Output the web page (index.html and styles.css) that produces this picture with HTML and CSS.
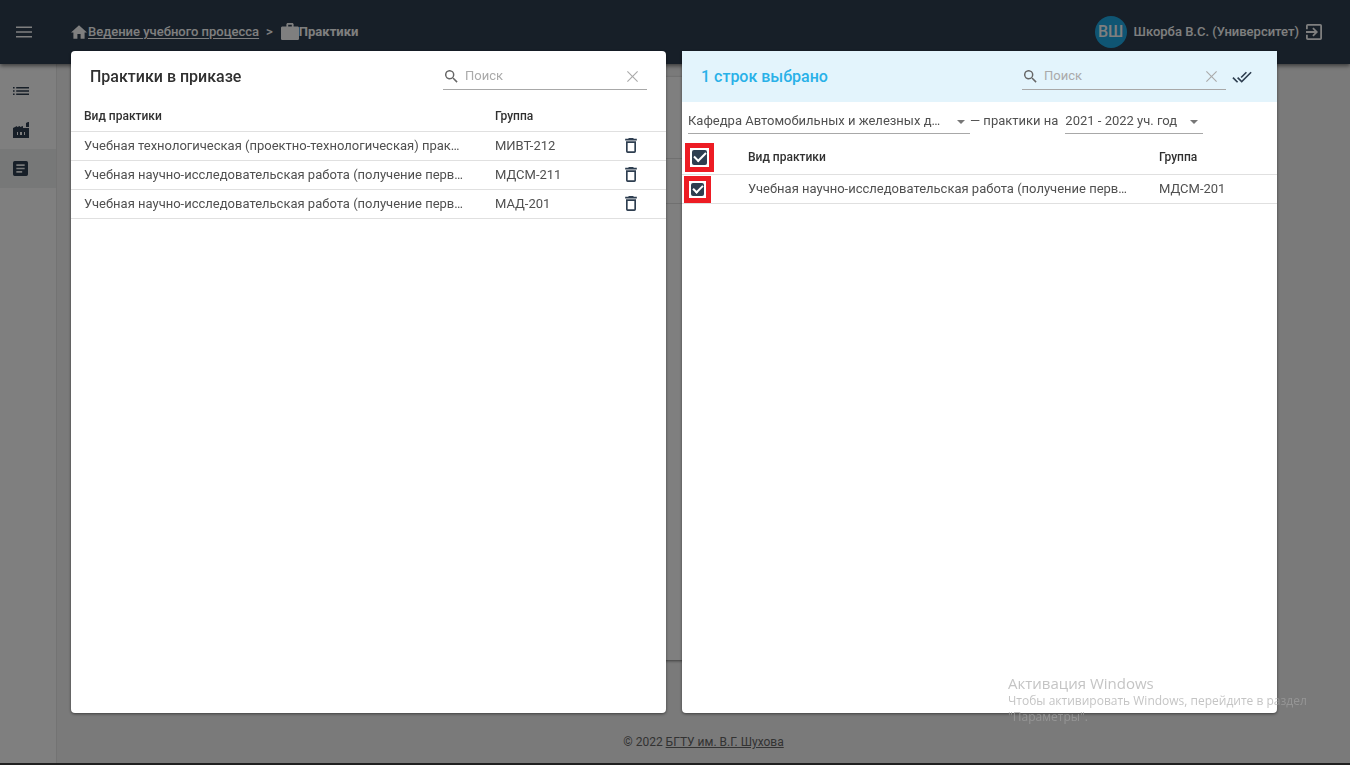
FILE: index.html
```html
<!DOCTYPE html>
<html lang="ru">
<head>
<meta charset="utf-8">
<title>Практики</title>
<link rel="stylesheet" href="styles.css">
</head>
<body>
<div class="app">
  <header class="topbar">
    <button class="icon-btn menu" aria-label="Меню"><svg width="18" height="18" viewBox="3 3 18 18"><path d="M4 6.500h16v1.600H4zm0 4.700h16v1.600H4zm0 4.700h16v1.600H4z"/></svg></button>
    <nav class="crumbs">
      <svg width="16" height="16" viewBox="2 2 20 19"><path d="M10 20v-6h4v6h5v-8h3L12 3 2 12h3v8z"/></svg>
      <a href="#">Ведение учебного процесса</a>
      <span class="sep">&gt;</span>
      <svg width="18" height="18" viewBox="2 2 20 20"><path fill-rule="evenodd" d="M21 6h-5V3l-1-1H9L8 3v3H3L2 7v13l1 1h18l1-1V7zM10 4h4v2h-4z"/></svg>
      <b>Практики</b>
    </nav>
    <div class="user">
      <span class="avatar">ВШ</span>
      <span>Шкорба В.С. (Университет)</span>
      <button class="icon-btn" aria-label="Выход"><svg width="16" height="16" viewBox="3 3 18 18"><path d="M10.090 15.590L11.500 17l5-5-5-5-1.410 1.410L12.670 11H3v2h9.670zM19 3H5a2 2 0 0 0-2 2v4h2V5h14v14H5v-4H3v4a2 2 0 0 0 2 2h14a2 2 0 0 0 2-2V5a2 2 0 0 0-2-2z"/></svg></button>
    </div>
  </header>
  <div class="body">
    <aside class="side">
      <a href="#" class="side-item" aria-label="Список"><svg width="16" height="16" viewBox="2 3 20 18"><path d="M2 7h2v2H2zm0 4h2v2H2zm0 4h2v2H2zM6 7h16v2H6zm0 4h16v2H6zm0 4h16v2H6z"/></svg></a>
      <a href="#" class="side-item" aria-label="Предприятия"><svg width="16" height="16" viewBox="0 0 16 16"><path fill-rule="evenodd" d="M0 16V6l4-2v1l3-1v1l3-1v2h6v10zM4 10v3h1v-3zm3 0v3h2v-3zm4 0v3h1v-3zM13 1l2-1h1v5h-3z"/></svg></a>
      <a href="#" class="side-item active" aria-label="Приказы"><svg width="15" height="15" viewBox="3 3 18 18"><path d="M19 3H5a2 2 0 0 0-2 2v14a2 2 0 0 0 2 2h14a2 2 0 0 0 2-2V5a2 2 0 0 0-2-2zm-5 14H7v-2h7zm3-4H7v-2h10zm0-4H7V7h10z"/></svg></a>
    </aside>
    <main class="main">
      <section class="card"><div class="card-tools"></div><div class="card-head"></div></section>
      <footer class="footer">© 2022 <a href="#">БГТУ им. В.Г. Шухова</a></footer>
    </main>
  </div>
  <div class="taskbar"></div>
</div>

<div class="overlay">
  <section class="panel">
    <div class="panel-head">
      <h2>Практики в приказе</h2>
      <div class="search">
        <svg width="13" height="13" viewBox="3 3 18 18"><path fill-rule="evenodd" d="M15.500 14h-.79l-.28-.27A6.500 6.500 0 1 0 13.730 14.430l.27.28v.79l5 4.990L20.490 19zM9.500 14a4.500 4.500 0 1 1 0-9 4.500 4.500 0 0 1 0 9z"/></svg>
        <input type="text" placeholder="Поиск" aria-label="Поиск">
        <button class="clear" aria-label="Очистить"><svg width="11" height="11" viewBox="5 5 14 14"><path d="M19 6l-1-1-6 6-6-6-1 1 6 6-6 6 1 1 6-6 6 6 1-1-6-6z"/></svg></button>
      </div>
    </div>
    <table class="grid">
      <thead><tr><th class="kind">Вид практики</th><th>Группа</th><th class="act"></th></tr></thead>
      <tbody>
        <tr><td>Учебная технологическая (проектно-технологическая) прак…</td><td>МИВТ-212</td><td class="act"><button class="icon-btn" aria-label="Удалить"><svg width="12" height="15" viewBox="5 3 14 18"><path fill-rule="evenodd" d="M6 19a2 2 0 0 0 2 2h8a2 2 0 0 0 2-2V7H6zM8 9h8v10H8zm7.500-5l-1-1h-5l-1 1H5v2h14V4z"/></svg></button></td></tr>
        <tr><td>Учебная научно-исследовательская работа (получение перв…</td><td>МДСМ-211</td><td class="act"><button class="icon-btn" aria-label="Удалить"><svg width="12" height="15" viewBox="5 3 14 18"><path fill-rule="evenodd" d="M6 19a2 2 0 0 0 2 2h8a2 2 0 0 0 2-2V7H6zM8 9h8v10H8zm7.500-5l-1-1h-5l-1 1H5v2h14V4z"/></svg></button></td></tr>
        <tr><td>Учебная научно-исследовательская работа (получение перв…</td><td>МАД-201</td><td class="act"><button class="icon-btn" aria-label="Удалить"><svg width="12" height="15" viewBox="5 3 14 18"><path fill-rule="evenodd" d="M6 19a2 2 0 0 0 2 2h8a2 2 0 0 0 2-2V7H6zM8 9h8v10H8zm7.500-5l-1-1h-5l-1 1H5v2h14V4z"/></svg></button></td></tr>
      </tbody>
    </table>
  </section>

  <section class="panel">
    <div class="panel-head selected">
      <h2>1 строк выбрано</h2>
      <div class="search">
        <svg width="13" height="13" viewBox="3 3 18 18"><path fill-rule="evenodd" d="M15.500 14h-.79l-.28-.27A6.500 6.500 0 1 0 13.730 14.430l.27.28v.79l5 4.990L20.490 19zM9.500 14a4.500 4.500 0 1 1 0-9 4.500 4.500 0 0 1 0 9z"/></svg>
        <input type="text" placeholder="Поиск" aria-label="Поиск">
        <button class="clear" aria-label="Очистить"><svg width="11" height="11" viewBox="5 5 14 14"><path d="M19 6l-1-1-6 6-6-6-1 1 6 6-6 6 1 1 6-6 6 6 1-1-6-6z"/></svg></button>
      </div>
      <button class="icon-btn apply" aria-label="Добавить выбранные"><svg width="20" height="12" viewBox="0 5 24 14"><path d="M18 7l-1.410-1.410-6.340 6.340 1.410 1.410zm4.240-1.410L11.660 16.170 7.480 12l-1.410 1.410L11.660 19l12-12zM.41 13.410L6 19l1.410-1.410L1.830 12z"/></svg></button>
    </div>
    <div class="filters">
      <div class="pick dept"><select aria-label="Кафедра"><option>Кафедра Автомобильных и железных д…</option></select></div>
      <span>— практики на</span>
      <div class="pick year"><select aria-label="Учебный год"><option>2021 - 2022 уч. год</option></select></div>
    </div>
    <table class="grid checks">
      <thead><tr><th class="check"><span class="mark"><input type="checkbox" checked aria-label="Выбрать все"></span></th><th class="kind">Вид практики</th><th>Группа</th></tr></thead>
      <tbody><tr><td class="check"><span class="mark"><input type="checkbox" checked aria-label="Выбрать строку"></span></td><td>Учебная научно-исследовательская работа (получение перв…</td><td>МДСМ-201</td></tr></tbody>
    </table>
  </section>
</div>

<div class="activation">
  <strong>Активация Windows</strong>
  <p>Чтобы активировать Windows, перейдите в раздел "Параметры".</p>
</div>
</body>
</html>
```
FILE: styles.css
```css
* { box-sizing: border-box; }
body { margin: 0; font-family: Roboto, "Liberation Sans", sans-serif; font-size: 13px; line-height: 16px; color: #505050; }
svg { display: block; fill: currentColor; flex: none; }
button { font: inherit; }
.icon-btn, .clear { display: flex; padding: 0; border: 0; background: none; color: inherit; cursor: pointer; }

.app { display: flex; flex-direction: column; min-height: 100vh; }
.topbar { display: flex; align-items: center; height: 64px; padding: 0 28px 0 15px; background: #2e3e50; color: #fff; font-weight: 500; box-shadow: 0 2px 4px rgba(0,0,0,.5); z-index: 1; }
.crumbs { display: flex; align-items: center; margin-left: 38px; }
.crumbs a { color: inherit; margin-left: 1px; text-underline-offset: 2px; }
.crumbs .sep { margin: 0 8px 0 7px; }
.user { display: flex; align-items: center; gap: 7px; margin-left: auto; }
.avatar { display: grid; place-items: center; width: 32px; height: 32px; border-radius: 50%; background: #1eaae6; font-size: 16px; }

.body { display: flex; flex: 1; }
.side { width: 57px; padding-top: 7px; background: #fff; border-right: 1px solid #e6e6e6; color: #2e3e50; }
.side-item { display: flex; align-items: center; height: 39px; padding-left: 13px; color: inherit; }
.side-item.active { background: #eef0f0; }
.main { display: flex; flex: 1; flex-direction: column; padding: 13px 0 0; background: #f5f5f5; }
.card { flex: 1; margin: 0 80px 0 16px; background: #fff; border-radius: 4px; box-shadow: 0 1px 3px rgba(0,0,0,.5); }
.card-tools { height: 82px; border-bottom: 1px solid #e0e0e0; }
.card-head { height: 45px; border-bottom: 1px solid #e0e0e0; }
.footer { padding: 74px 0 13px; text-align: center; font-size: 12px; color: #666; }
.footer a { color: inherit; }
.taskbar { height: 2px; background: #404040; }

.overlay { position: fixed; inset: 0; display: flex; gap: 16px; padding: 51px 73px 52px 71px; background: rgba(0,0,0,.5); z-index: 2; }
.panel { flex: 1 1 0; min-width: 0; overflow: hidden; background: #fff; border-radius: 4px; box-shadow: 0 1px 3px rgba(0,0,0,.5); }
.panel + .panel { border-radius: 0 0 4px 4px; }
.panel-head { display: flex; align-items: center; height: 51px; padding: 0 19px; }
.panel-head h2 { margin: 0 auto 0 0; font-size: 16px; font-weight: 500; color: #303030; }
.selected { background: #e3f4fc; padding-right: 25px; }
.selected h2 { color: #29b1e8; }
.search { display: flex; align-items: center; width: 204px; height: 26px; padding: 0 9px 0 2px; border-bottom: 1px solid #a8a8a8; color: #666; }
.search input { flex: 1; min-width: 0; padding: 0; margin: 0 0 0 7px; border: 0; outline: 0; background: none; font: inherit; color: #444; }
.search input::placeholder { color: #aaa; }
.clear { color: #aaa; }
.apply { margin-left: 6px; color: #2e3e50; }

.filters { display: flex; align-items: center; height: 32px; padding: 6px 6px 0; }
.pick { position: relative; height: 26px; border-bottom: 1px solid #a8a8a8; }
.pick::after { content: ""; position: absolute; right: 5px; top: 12px; border: 4px solid transparent; border-top-color: #777; border-bottom: 0; pointer-events: none; }
.pick select { appearance: none; width: 100%; height: 25px; padding: 0 20px 0 0; border: 0; outline: 0; background: none; font: inherit; color: inherit; }
.dept { width: 282px; }
.year { width: 138px; margin-left: 7px; }

.grid { width: 100%; table-layout: fixed; border-collapse: separate; border-spacing: 0; }
.grid th, .grid td { height: 29px; padding: 0 0 0 13px; border-bottom: 1px solid #e0e0e0; text-align: left; white-space: nowrap; }
.grid th { height: 30px; padding-bottom: 2px; font-size: 12px; font-weight: 500; color: #303030; }
.grid td { padding-bottom: 1px; }
.grid .kind { width: 411px; }
.grid .act { width: 41px; padding: 0 0 2px; color: #2e3e50; }
.grid.checks th { height: 41px; padding-top: 6px; padding-bottom: 0; }
.grid.checks td { padding-bottom: 0; }
.grid .check { width: 53px; padding-left: 3px; }
.grid td.check { padding-left: 2px; }
.mark { display: grid; place-items: center; width: 29px; height: 29px; border: 5px solid #ed1c24; }
td .mark { width: 27px; height: 27px; }
.mark input { appearance: none; display: grid; place-items: center; width: 15px; height: 15px; margin: 0; border-radius: 2px; background: #2e3e50; }
td .mark input { width: 13px; height: 13px; }
.mark input:checked::before { content: ""; width: 10px; height: 5px; margin-bottom: 3px; border: solid #fff; border-width: 0 0 2px 2px; transform: rotate(-45deg); }
td .mark input:checked::before { width: 8px; height: 4px; margin-bottom: 2px; }

.activation { position: fixed; right: 42px; bottom: 40px; width: 300px; z-index: 3; color: rgba(165,165,165,.65); font-family: "Open Sans", "Noto Sans", sans-serif; font-size: 12px; pointer-events: none; }
.activation strong { display: block; font-size: 15px; font-weight: 400; line-height: 20px; }
.activation p { margin: 0; }
```
